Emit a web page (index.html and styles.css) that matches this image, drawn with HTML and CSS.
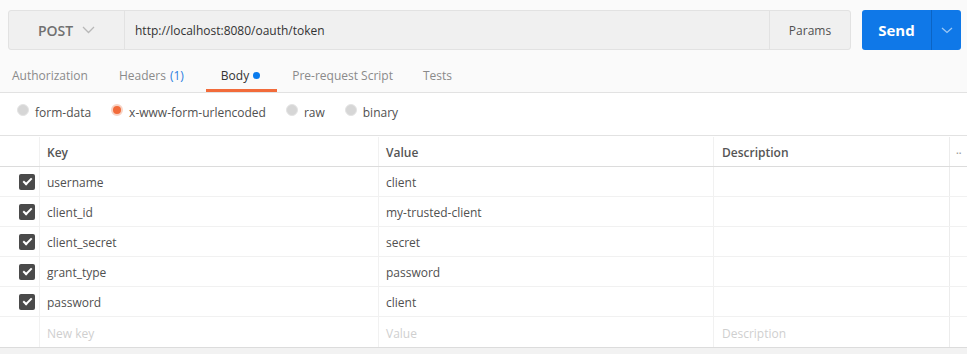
FILE: index.html
```html
<!DOCTYPE html>
<html lang="en">
  <head>
    <meta charset="UTF-8" />
    <title>Request</title>
    <link rel="stylesheet" href="styles.css">
  </head>
  <body>
    <div class="request-bar">
      <div class="url-group">
        <div class="method">
          POST
          <svg class="chev" width="13" height="8" viewBox="0 0 13 8"><path d="M1 1 L6.5 6.5 L12 1" fill="none" stroke="#b8b8b8" stroke-width="1.3"/></svg>
        </div>
        <div class="url">http://localhost:8080/oauth/token</div>
        <div class="params">Params</div>
      </div>
      <div class="send">
        <span class="send-label">Send</span>
        <span class="send-more">
          <svg width="12" height="7" viewBox="0 0 12 7"><path d="M1 1 L6 5.5 L11 1" fill="none" stroke="#9cc8f5" stroke-width="1.3"/></svg>
        </span>
      </div>
    </div>

    <div class="tabs">
      <div class="tab">Authorization</div>
      <div class="tab headers">Headers <span class="count">(1)</span></div>
      <div class="tab active">Body <span class="dot"></span></div>
      <div class="tab">Pre-request Script</div>
      <div class="tab">Tests</div>
    </div>

    <div class="body-types">
      <label class="radio"><span class="circle"></span>form-data</label>
      <label class="radio"><span class="circle on"></span>x-www-form-urlencoded</label>
      <label class="radio"><span class="circle"></span>raw</label>
      <label class="radio"><span class="circle"></span>binary</label>
    </div>

    <div class="kv-table">
      <div class="row head">
        <div class="cell check"></div>
        <div class="cell key">Key</div>
        <div class="cell value">Value</div>
        <div class="cell desc">Description</div>
        <div class="cell more">&middot;&middot;</div>
      </div>
      <div class="row">
        <div class="cell check"><span class="box"></span></div>
        <div class="cell key">username</div>
        <div class="cell value">client</div>
        <div class="cell desc"></div>
        <div class="cell more"></div>
      </div>
      <div class="row">
        <div class="cell check"><span class="box"></span></div>
        <div class="cell key">client_id</div>
        <div class="cell value">my-trusted-client</div>
        <div class="cell desc"></div>
        <div class="cell more"></div>
      </div>
      <div class="row">
        <div class="cell check"><span class="box"></span></div>
        <div class="cell key">client_secret</div>
        <div class="cell value">secret</div>
        <div class="cell desc"></div>
        <div class="cell more"></div>
      </div>
      <div class="row">
        <div class="cell check"><span class="box"></span></div>
        <div class="cell key">grant_type</div>
        <div class="cell value">password</div>
        <div class="cell desc"></div>
        <div class="cell more"></div>
      </div>
      <div class="row">
        <div class="cell check"><span class="box"></span></div>
        <div class="cell key">password</div>
        <div class="cell value">client</div>
        <div class="cell desc"></div>
        <div class="cell more"></div>
      </div>
      <div class="row new">
        <div class="cell check"></div>
        <div class="cell key">New key</div>
        <div class="cell value">Value</div>
        <div class="cell desc">Description</div>
        <div class="cell more"></div>
      </div>
    </div>
  </body>
</html>
```

FILE: styles.css
```css
* {
  margin: 0;
  padding: 0;
  box-sizing: border-box;
}
body {
  font-family: "Open Sans", "Liberation Sans", sans-serif;
  font-size: 12px;
  color: #505050;
  background-color: #f2f2f2;
  width: 967px;
  height: 354px;
  overflow: hidden;
}
.request-bar {
  display: flex;
  gap: 11px;
  padding: 10px 6px 0 8px;
  background-color: #fafafa;
}
.url-group {
  flex: 1;
  display: flex;
  height: 40px;
  background-color: #f0f0f0;
  border: 1px solid #e2e2e2;
  border-radius: 3px;
}
.method {
  width: 116px;
  display: flex;
  align-items: center;
  justify-content: center;
  gap: 9px;
  font-size: 14px;
  font-weight: 600;
  color: #707070;
  border-right: 1px solid #e2e2e2;
}
.url {
  flex: 1;
  display: flex;
  align-items: center;
  padding-left: 10px;
  font-size: 12px;
  color: #333;
}
.params {
  width: 81px;
  display: flex;
  align-items: center;
  justify-content: center;
  font-size: 12px;
  color: #505050;
  border-left: 1px solid #e2e2e2;
}
.send {
  width: 99px;
  height: 40px;
  display: flex;
  background-color: #0f78e8;
  border-radius: 3px;
  color: #fff;
}
.send-label {
  flex: 1;
  display: flex;
  align-items: center;
  justify-content: center;
  font-size: 15px;
  font-weight: 700;
  border-right: 1px solid #0b64c4;
}
.send-more {
  width: 29px;
  display: flex;
  align-items: center;
  justify-content: center;
}
.tabs {
  display: flex;
  height: 43px;
  padding-top: 11px;
  background-color: #fafafa;
  border-bottom: 1px solid #e2e2e2;
}
.tab {
  display: flex;
  align-items: center;
  gap: 4px;
  padding: 0 15px;
  font-size: 12px;
  color: #8a8a8a;
  border-bottom: 3px solid transparent;
}
.tab:first-child {
  padding-left: 12px;
  padding-right: 16px;
}
.tab.headers {
  padding-right: 22px;
}
.tab .count {
  color: #2b7de1;
}
.tab.active {
  padding-right: 17px;
  color: #333;
  border-bottom-color: #f26b3a;
}
.dot {
  width: 7px;
  height: 7px;
  border-radius: 50%;
  background-color: #097bed;
}
.body-types {
  display: flex;
  align-items: center;
  gap: 20px;
  height: 43px;
  padding: 0 0 4px 17px;
  background-color: #fff;
  border-bottom: 1px solid #e2e2e2;
}
.radio {
  display: flex;
  align-items: center;
  gap: 6px;
  font-size: 12px;
  color: #505050;
}
.circle {
  width: 12px;
  height: 12px;
  border-radius: 50%;
  background-color: #d6d6d6;
  border: 1px solid #e4e4e4;
  margin-top: -5px;
}
.circle.on {
  background-color: #f26b3a;
  border: 2px solid #f7d3c5;
}
.kv-table {
  background-color: #fff;
  border-bottom: 1px solid #dcdcdc;
}
.row {
  display: flex;
  height: 30px;
  border-bottom: 1px solid #f1f1f1;
}
.row.head {
  height: 31px;
  padding-top: 1px;
  border-bottom: 1px solid #dcdcdc;
  font-weight: 600;
  color: #555;
}
.row.new {
  border-bottom: none;
  color: #cfcfcf;
}
.cell {
  display: flex;
  align-items: center;
  padding: 2px 0 0 7px;
  border-right: 1px solid #f1f1f1;
}
.cell.check {
  width: 40px;
  padding: 1px 0 0 19px;
}
.cell.key {
  width: 339px;
}
.cell.value {
  width: 335px;
}
.cell.desc {
  width: 236px;
  padding-left: 8px;
  border-right: 1px solid #ececec;
}
.cell.more {
  flex: 1;
  border-right: none;
  color: #999;
  font-size: 10px;
  padding-left: 6px;
}
.box {
  position: relative;
  width: 16px;
  height: 16px;
  border-radius: 2px;
  background-color: #4a4a4a;
}
.box::after {
  content: "";
  position: absolute;
  left: 4px;
  top: 4px;
  width: 7px;
  height: 3px;
  border-left: 2px solid #fff;
  border-bottom: 2px solid #fff;
  transform: rotate(-45deg);
}
```
